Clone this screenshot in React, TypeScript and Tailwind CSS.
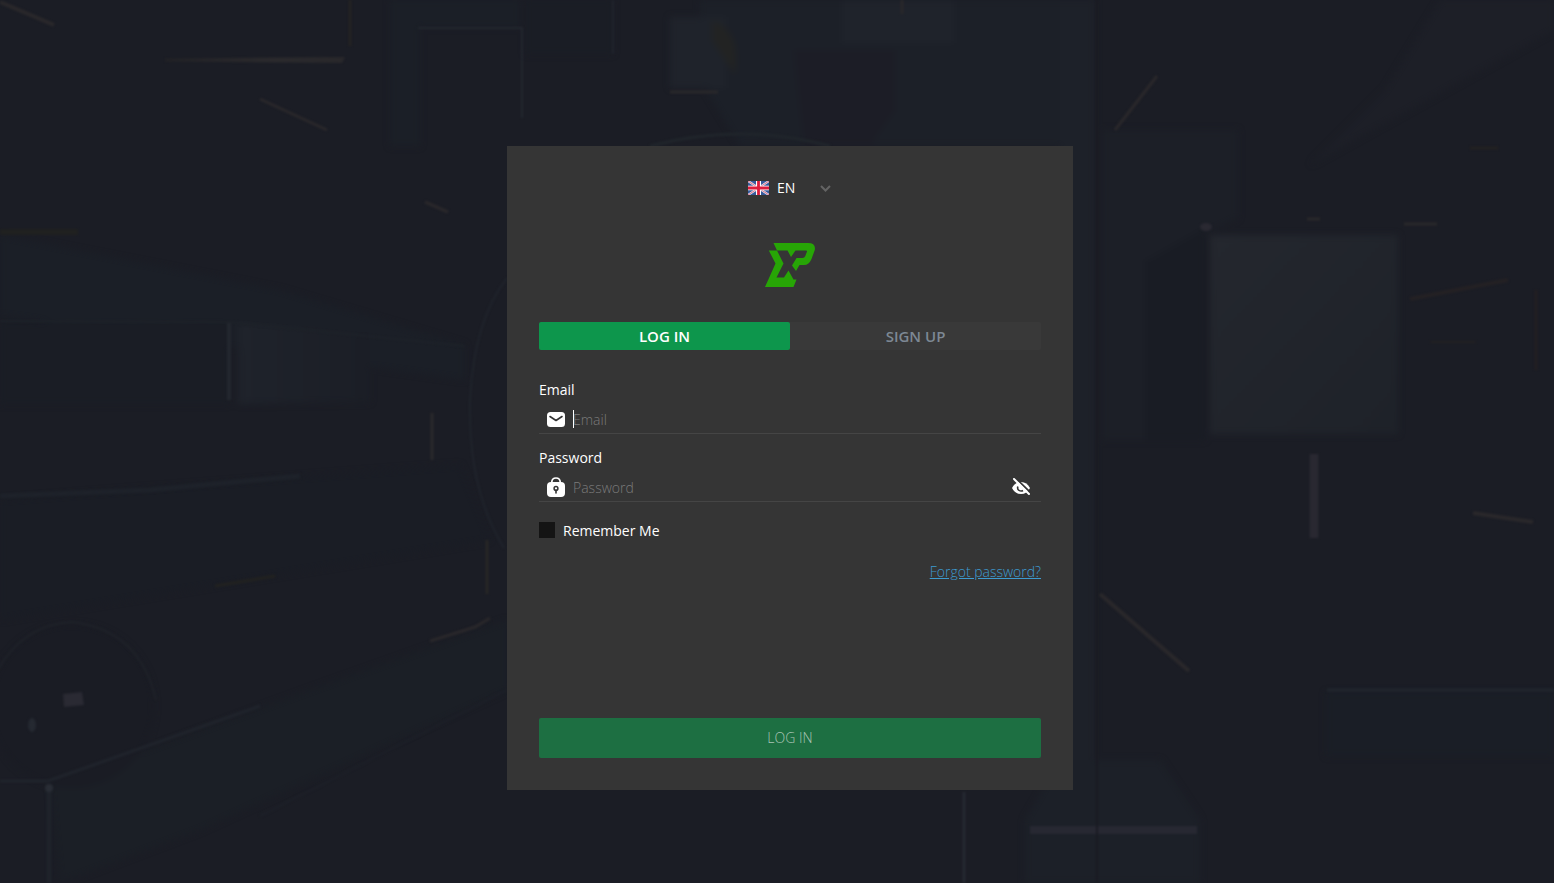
import { useState } from 'react';

function Backdrop() {
  return (
    <svg
      className="absolute inset-0 h-full w-full"
      viewBox="0 0 1554 883"
      preserveAspectRatio="xMidYMid slice"
      fill="none"
      aria-hidden="true"
    >
      <defs>
        <filter id="soft" filterUnits="userSpaceOnUse" x="0" y="0" width="1554" height="883" colorInterpolationFilters="sRGB">
          <feGaussianBlur stdDeviation="3" />
        </filter>
        <filter id="edge" filterUnits="userSpaceOnUse" x="0" y="0" width="1554" height="883" colorInterpolationFilters="sRGB">
          <feGaussianBlur stdDeviation="0.8" />
        </filter>
        <linearGradient id="cube" x1="0" y1="0" x2="1" y2="1">
          <stop offset="0" stopColor="#24272e" />
          <stop offset="1" stopColor="#1e2229" />
        </linearGradient>
        <linearGradient id="slab" x1="0" y1="0" x2="1" y2="0">
          <stop offset="0" stopColor="#1f232b" />
          <stop offset="1" stopColor="#1b1e26" />
        </linearGradient>
        <linearGradient id="strip" gradientUnits="userSpaceOnUse" x1="165" y1="0" x2="345" y2="0">
          <stop offset="0" stopColor="#222226" />
          <stop offset="0.6" stopColor="#2b2a2d" />
          <stop offset="1" stopColor="#29282b" />
        </linearGradient>
      </defs>

      {/* large faces */}
      <g filter="url(#soft)">
        <path d="M0 235L280 290L465 345V380L0 315Z" fill="#1b1f27" />
        <path d="M0 322H229V404H0Z" fill="#1a1d25" />
        <path d="M238 324L370 332V402L238 404Z" fill="url(#slab)" />
        <path d="M0 500L460 465L490 540L0 620Z" fill="#1a1d25" />
        <path d="M50 785L310 690L507 620V690L200 830L60 883Z" fill="#1b1f26" />
        <path d="M390 0H520V27H420V146H390Z" fill="#1b1f27" />
        <path d="M525 0H613V54H525Z" fill="#1a1d25" />
        <path d="M700 0H1095V146H740L700 80Z" fill="#1c2028" />
        <path d="M670 17H696V88H670Z" fill="#1f232b" />
        <path d="M670 17H726V88H670Z" fill="#1f232b" />
        <path d="M712 20Q742 30 735 75L712 40Z" fill="#222323" />
        <path d="M842 0H954V43H842Z" fill="#1f232b" />
        <path d="M794 50H895V110L870 146H804Z" fill="#1c1d26" />
        <path d="M1060 0H1095V790H1060Z" fill="#1d2129" />
        <path d="M1102 130H1238V218L1145 262V440H1102Z" fill="#1c1f27" />
        <path d="M1145 262L1205 228V440H1145Z" fill="#191c24" />
        <path d="M1385 90L1440 0H1554V30L1310 165Z" fill="#1d1f27" />
        <path d="M1060 760H1160L1200 820V883H1025V820Z" fill="#1c2028" />
        <path d="M1326 692H1554V756H1326Z" fill="#1a1e26" />
        <rect x="1210" y="235" width="188" height="199" fill="url(#cube)" />
        <circle cx="72" cy="706" r="82" fill="#1a1c24" />
      </g>

      {/* cold edges and sphere outlines */}
      <g stroke="#23272f" strokeWidth="2" filter="url(#edge)">
        <path d="M-8 680Q20 624 72 622Q140 630 156 700" stroke="#1f2229" />
        <path d="M507 278Q474 320 470 400Q468 490 504 548" stroke="#20242c" />
        <path d="M650 146Q740 122 830 146" stroke="#20252b" strokeWidth="3" />
        <path d="M229 322V400" strokeWidth="4" />
        <path d="M0 321L229 322L465 346" stroke="#1e2229" />
        <path d="M418 28H522V118" />
        <path d="M613 0V54" stroke="#20242c" />
        <path d="M0 496L150 490L300 476" strokeWidth="5" stroke="#1e222a" />
        <path d="M0 781H48L260 706" stroke="#20242c" strokeWidth="3" />
        <path d="M49 784V883" stroke="#1f232b" strokeWidth="5" />
        <path d="M260 816L507 690" stroke="#1d2028" />
        <path d="M1327 690H1554" stroke="#21262e" strokeWidth="3" />
        <path d="M1030 830H1197" stroke="#272832" strokeWidth="8" />
        <path d="M964 792V883" stroke="#262932" strokeWidth="3" />
        <path d="M1097 0V883" stroke="#1a1a22" />
        <path d="M63 694L82 692L84 705L64 707Z" fill="#2a2a33" stroke="none" />
        <ellipse cx="32" cy="725" rx="4" ry="7" fill="#252931" stroke="none" />
        <ellipse cx="1206" cy="227" rx="6" ry="4" fill="#2a2932" stroke="none" />
        <circle cx="49" cy="788" r="4" fill="#292d35" stroke="none" />
      </g>

      {/* warm light strips */}
      <g stroke="#2a282b" strokeWidth="3" filter="url(#edge)">
        <path d="M0 2L54 25" strokeWidth="4" />
        <path d="M165 58.500L345 57L342 63L165 61.500Z" fill="url(#strip)" stroke="none" />
        <path d="M260 99L327 130" />
        <path d="M350 0V46" stroke="#242323" />
        <path d="M425 202L448 212" />
        <path d="M0 232H78" stroke="#202120" strokeWidth="6" />
        <path d="M432 413V460" stroke="#2b2a2c" />
        <path d="M487 540V594" stroke="#282726" />
        <path d="M430 641L475 627L490 618" />
        <path d="M215 586L275 576" stroke="#222220" />
        <path d="M670 92H718" />
        <path d="M902 0V14" />
        <path d="M1115 130L1157 76" />
        <path d="M1404 224H1437" />
        <path d="M1307 219H1320" />
        <path d="M1410 299L1508 280" strokeWidth="4" stroke="#242124" />
        <path d="M1536 290V370" stroke="#231f22" />
        <path d="M1430 342H1476" stroke="#222023" strokeWidth="2" />
        <path d="M1314 454V538" stroke="#292831" strokeWidth="9" />
        <path d="M1100 594L1189 671" strokeWidth="4" />
        <path d="M1473 513L1533 522" strokeWidth="4" />
        <path d="M1470 148H1498" stroke="#232121" />
      </g>
    </svg>
  );
}

function UkFlag() {
  return (
    <svg className="h-[14px] w-[21px] shrink-0" viewBox="0 0 21 14" aria-hidden="true">
      <path fill="#35599a" d="M0 0H21V14H0Z" />
      <path stroke="#e4e4ee" strokeWidth="2.200" d="M0 0L21 14M21 0L0 14" />
      <path stroke="#d8506c" strokeWidth="0.800" d="M0 0L21 14M21 0L0 14" />
      <path stroke="#fff" strokeWidth="5" d="M10.500 0V14" />
      <path stroke="#fff" strokeWidth="4.600" d="M0 7H21" />
      <path stroke="#dc1c3c" strokeWidth="2.800" d="M10.500 0V14M0 7H21" />
    </svg>
  );
}

function Logo() {
  return (
    <svg className="h-11 w-[50px]" viewBox="0 0 50 44" role="img" aria-label="XP">
      <g fill="#27a506">
        <path d="M8.500 0H43Q51 0 49.800 7L46.500 16Q44 22 39 22H34.500L31 28L27 22.500L31.500 15H37.500Q39.500 15 40.300 13L42 8.500Q42.300 7.500 41 7.500H30.500L26 14L22.500 7.500H12Z" />
        <path d="M3.800 7.500H12L18.500 20.500L11.500 34.500H19L23.500 27.500L28.500 36.500H31.500L28.500 44H0L10.500 20.500Z" />
      </g>
    </svg>
  );
}

function MailIcon() {
  return (
    <svg className="h-[18px] w-[18px] shrink-0" viewBox="0 0 18 18" aria-hidden="true">
      <rect y="2" width="18" height="15" rx="3.500" fill="#fff" />
      <path d="M3 6.500L9 10.500L15 6.500" fill="none" stroke="#343434" strokeWidth="1.600" strokeLinecap="round" strokeLinejoin="round" />
    </svg>
  );
}

function LockIcon() {
  return (
    <svg className="h-5 w-[18px] shrink-0" viewBox="0 0 18 20" aria-hidden="true">
      <path d="M4.800 7V5Q5 1 9 1Q13 1 13.200 5V7" fill="none" stroke="#fff" strokeWidth="1.700" />
      <rect y="5" width="18" height="15" rx="4" fill="#fff" />
      <circle cx="9" cy="11.500" r="1.900" fill="none" stroke="#343434" strokeWidth="1.500" />
      <path d="M9 13V16" stroke="#343434" strokeWidth="1.600" strokeLinecap="round" />
    </svg>
  );
}

function EyeOffIcon() {
  return (
    <svg className="h-[18px] w-[20px]" viewBox="0 0 20 18" aria-hidden="true">
      <path d="M1 10Q4 4 10 4Q16 4 19 10Q16 16 10 16Q4 16 1 10Z" fill="#fff" />
      <path d="M6.800 8.500Q6 12 9 12.800Q11 13.200 12 12.500" fill="none" stroke="#343434" strokeWidth="1.600" />
      <path d="M4.500 0L20 15" stroke="#343434" strokeWidth="1.800" />
      <path d="M3 1L18 16" stroke="#fff" strokeWidth="2" strokeLinecap="round" />
    </svg>
  );
}

export default function App() {
  const [email, setEmail] = useState('');
  const [password, setPassword] = useState('');
  const [visible, setVisible] = useState(false);
  const [remember, setRemember] = useState(false);

  return (
    <div className="relative min-h-screen overflow-hidden bg-[#1b1d25] font-['Open_Sans',sans-serif] text-sm text-white">
      <Backdrop />
      <main className="relative flex justify-center pt-[146px] pb-12 pl-[26px]">
        <section className="flex w-full max-w-[566px] flex-col bg-[#353535] p-8">
          <div className="flex h-5 items-center justify-center gap-2">
            <UkFlag />
            <div className="relative flex items-center">
              <select
                aria-label="Language"
                defaultValue="en"
                className="h-5 w-[55px] appearance-none bg-transparent leading-5 outline-none"
              >
                <option value="en">EN</option>
              </select>
              <svg className="pointer-events-none absolute right-px h-[7px] w-[11px]" viewBox="0 0 11 7" fill="none" aria-hidden="true">
                <path d="M1 1L5.500 5.500L10 1" stroke="#646464" strokeWidth="2" />
              </svg>
            </div>
          </div>

          <div className="mt-[45px] flex justify-center">
            <Logo />
          </div>

          <div className="mt-[35px] grid grid-cols-2 rounded-xs bg-[#393939] text-[15px] font-semibold">
            <button type="button" className="h-7 rounded-xs bg-[#0d964c] pt-0.5 text-white">
              LOG IN
            </button>
            <button type="button" className="h-7 rounded-xs pt-0.5 text-[#7d8894]">
              SIGN UP
            </button>
          </div>

          <form className="mt-[30px] flex flex-col" onSubmit={(e) => e.preventDefault()}>
            <label htmlFor="email" className="mb-1 leading-5 font-medium">
              Email
            </label>
            <div className="flex h-[30px] items-center gap-2 border-b border-[#454545] px-2">
              <MailIcon />
              <div className="relative flex flex-1 items-center">
                <span className="absolute left-0 h-[18px] w-px bg-white" />
                <input
                  id="email"
                  type="email"
                  placeholder="Email"
                  value={email}
                  onChange={(e) => setEmail(e.target.value)}
                  className="w-full bg-transparent pt-0.5 font-light outline-none placeholder:text-[#7a7a7a]"
                />
              </div>
            </div>

            <label htmlFor="password" className="mt-[14px] mb-1 leading-5">
              Password
            </label>
            <div className="flex h-[30px] items-center gap-2 border-b border-[#454545] pr-2.5 pl-2">
              <LockIcon />
              <input
                id="password"
                type={visible ? 'text' : 'password'}
                placeholder="Password"
                value={password}
                onChange={(e) => setPassword(e.target.value)}
                className="flex-1 bg-transparent pt-0.5 font-light outline-none placeholder:text-[#7a7a7a]"
              />
              <button type="button" aria-label="Show password" onClick={() => setVisible(!visible)}>
                <EyeOffIcon />
              </button>
            </div>

            <div className="mt-[18px] flex items-center gap-2">
              <input
                id="remember"
                type="checkbox"
                checked={remember}
                onChange={(e) => setRemember(e.target.checked)}
                className="h-4 w-4 appearance-none bg-[#141414] checked:bg-[#0d964c]"
              />
              <label htmlFor="remember" className="pt-0.5 leading-[18px]">
                Remember Me
              </label>
            </div>

            <a href="#forgot" className="mt-[22px] self-end leading-5 font-light text-[#3d9bd0] underline">
              Forgot password?
            </a>

            <button type="submit" className="mt-34 h-10 rounded-xs bg-[#1d6f42] font-light text-[#a9c4b5]">
              LOG IN
            </button>
          </form>
        </section>
      </main>
    </div>
  );
}
